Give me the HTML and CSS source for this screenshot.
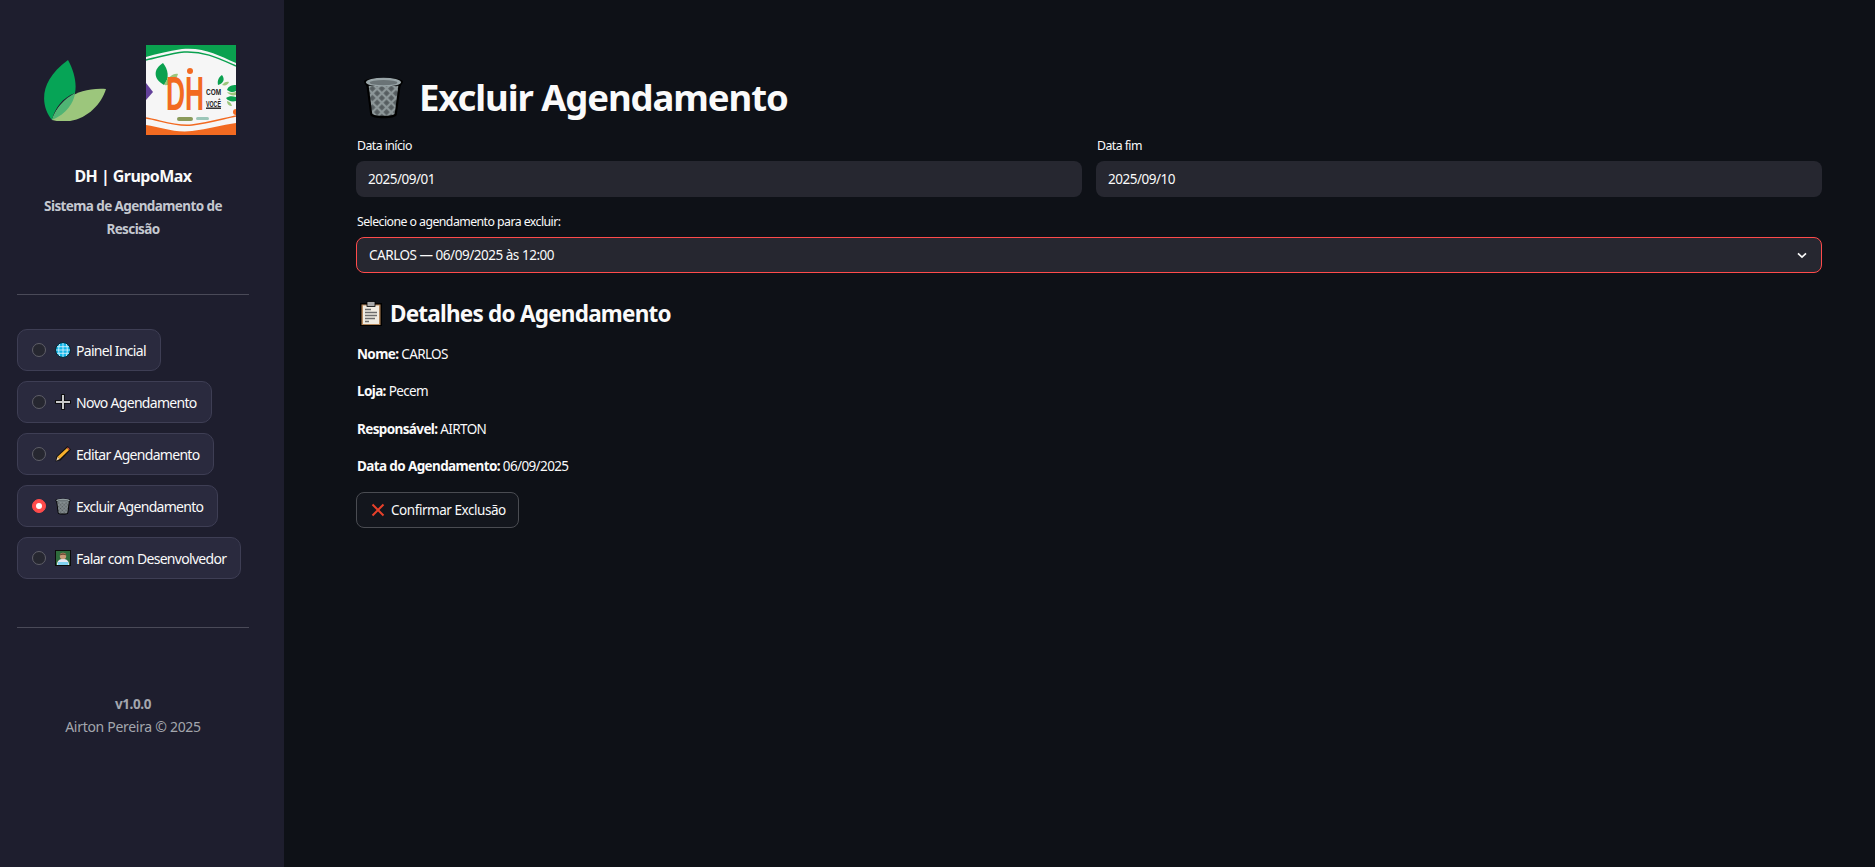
FILE: index.html
```html
<!DOCTYPE html>
<html lang="pt-BR">
<head>
    <meta charset="utf-8">
    <title>Excluir Agendamento</title>
    <link rel="stylesheet" href="styles.css">
</head>
<body>
    <div class="app">
        <aside class="sidebar">
            <div class="logos">
                <svg class="logo-leaf" viewBox="44 58 64 62" width="64" height="62">
                    <path d="M52 119C40 104 39 80 68 59C74 70 77 82 75 92C62 97 55 107 52 119Z" fill="#06a456"/>
                    <path d="M52 119C58 101 76 86 106 88C100 108 78 126 52 119Z" fill="#9cc67c"/>
                    <path d="M52 119C56 107 64 98 75 92C74 102 66 113 52 119Z" fill="#4fb474"/>
                </svg>
                <svg class="logo-dh" viewBox="0 0 90 90" width="90" height="90">
                    <rect width="90" height="90" fill="#f6f6f6"/>
                    <path d="M0 0H90V18C72 10 58 2 36 4C22 6 10 9 0 12Z" fill="#0aa14f"/>
                    <path d="M0 15C14 12 26 8 38 7C58 6 72 13 90 21" fill="none" stroke="#0aa14f" stroke-width="1.500"/>
                    <path d="M0 80C14 82 28 88 46 86C62 84 76 80 90 78V90H0Z" fill="#f26a21"/>
                    <path d="M0 73C14 75 28 82 46 80C62 78 76 74 90 71" fill="none" stroke="#f26a21" stroke-width="1.500"/>
                    <path d="M0 38L7 47L0 55Z" fill="#63419a"/>
                    <path d="M18 40C7 34 7 24 17 18C22 24 24 33 18 40Z" fill="#0aa14f"/>
                    <path d="M18 40C22 32 27 28 32 29C30 36 24 41 18 40Z" fill="#9cc67c"/>
                    <text class="logo-dh-big" transform="translate(20 65) scale(.548 1)">DH</text>
                    <text class="logo-dh-small" transform="translate(60 50) scale(.68 1)">COM</text>
                    <text class="logo-dh-small" transform="translate(60 61.500) scale(.556 1)">VOCÊ</text>
                    <rect x="60" y="62.500" width="15" height="1.400" fill="#222"/>
                    <circle cx="44" cy="26" r="3" fill="#f26a21"/>
                    <path d="M72 40C71 35 73 32 76 30C79 34 78 38 72 40Z" fill="#0aa14f"/>
                    <path d="M76 40C78 37 81 36 83 37C82 40 79 41 76 40Z" fill="#9cc67c"/>
                    <path d="M81 45C82 41 86 40 90 40V46C87 48 84 47 81 45Z" fill="#0aa14f"/>
                    <path d="M81 47C84 48 87 48 90 47V50C87 51 83 50 81 47Z" fill="#9cc67c"/>
                    <path d="M80 53C83 51 86 51 90 52V56C86 57 82 56 80 53Z" fill="#0aa14f"/>
                    <path d="M81 56C84 57 85 58 86 61C83 61 81 59 81 56Z" fill="#9cc67c"/>
                    <rect x="31" y="72" width="16" height="4" rx="2" fill="#8a9a5a"/>
                    <rect x="50" y="72" width="13" height="3" rx="1.500" fill="#9cc6b8"/>
                    <circle cx="90" cy="67" r="3" fill="#f26a21"/>
                </svg>
            </div>
            <div class="brand">DH | GrupoMax</div>
            <div class="tagline">Sistema de Agendamento de Rescisão</div>
            <hr class="side-rule side-rule-top">

            <nav class="menu">
                <label class="menu-item">
                    <span class="radio"></span>
                    <svg class="menu-icon" viewBox="0 0 16 16" width="16" height="16">
                        <circle cx="8" cy="8" r="7.400" fill="#0fb5e8" stroke="#06222c" stroke-width="1"/>
                        <path d="M1 8H15M2 4.700H14M2 11.300H14M8 1V15M4.600 2C3.400 6 3.400 10 4.600 14M11.400 2C12.600 6 12.600 10 11.400 14" fill="none" stroke="#dff6ff" stroke-width=".8"/>
                    </svg>
                    <span>Painel Incial</span>
                </label>
                <label class="menu-item">
                    <span class="radio"></span>
                    <svg class="menu-icon" viewBox="0 0 16 16" width="16" height="16">
                        <path d="M8 0V16M0 8H16" stroke="#0b0b0b" stroke-width="3.600"/>
                        <path d="M8 1V15M1 8H15" stroke="#c9c9c9" stroke-width="2"/>
                    </svg>
                    <span>Novo Agendamento</span>
                </label>
                <label class="menu-item">
                    <span class="radio"></span>
                    <svg class="menu-icon" viewBox="0 0 16 16" width="16" height="16">
                        <path d="M.5 15.500L1.500 10.500L12.500 0L16 3.500L5.500 14.500Z" fill="#111"/>
                        <path d="M2.500 10.800L12 2L14 4L4.800 13Z" fill="#f6b02c"/>
                        <path d="M12 2L12.800 1.200L14.800 3.200L14 4Z" fill="#e2574c"/>
                        <path d="M1.300 14.700L2.500 10.800L4.800 13Z" fill="#f1d3a6"/>
                    </svg>
                    <span>Editar Agendamento</span>
                </label>
                <label class="menu-item">
                    <span class="radio radio-on"></span>
                    <svg class="menu-icon" viewBox="0 2 40 41" width="16" height="17">
                        <use href="#trash"/>
                    </svg>
                    <span>Excluir Agendamento</span>
                </label>
                <label class="menu-item">
                    <span class="radio"></span>
                    <svg class="menu-icon" viewBox="0 0 16 16" width="16" height="16">
                        <rect x=".5" y=".5" width="15" height="15" fill="#2f6b3c" stroke="#0b0b0b"/>
                        <path d="M2 15C2 10 5 9 8 9C11 9 14 10 14 15Z" fill="#e8e8f2"/>
                        <circle cx="8" cy="6" r="3.200" fill="#c99a78"/>
                        <path d="M4.700 5.500C5 2.500 11 2.500 11.300 5.500C9.500 4.500 6.500 4.500 4.700 5.500Z" fill="#6b4630"/>
                        <rect x="3" y="12" width="10" height="3" fill="#7fd2f0"/>
                    </svg>
                    <span>Falar com Desenvolvedor</span>
                </label>
            </nav>

            <hr class="side-rule side-rule-bottom">
            <div class="version">v1.0.0</div>
            <div class="credit">Airton Pereira © 2025</div>
        </aside>

        <main class="content">
            <h1 class="page-title">
                <svg class="title-icon" viewBox="0 2 40 41" width="41" height="43">
                    <defs>
                        <pattern id="mesh" width="6.500" height="6.500" patternUnits="userSpaceOnUse" patternTransform="rotate(45)">
                            <rect width="6.500" height="6.500" fill="#8d9799"/>
                            <rect width="4.300" height="4.300" x="1.100" y="1.100" fill="#565d60"/>
                        </pattern>
                        <g id="trash">
                            <path d="M1 7C1 2 39 2 39 7C39 9 37 10 36.500 12L33 39C32.500 44 7.500 44 7 39L3.500 12C3 10 1 9 1 7Z" fill="#000"/>
                            <path d="M5.500 11L9 38C9.500 41 30.500 41 31 38L34.500 11Z" fill="url(#mesh)"/>
                            <ellipse cx="20" cy="7.500" rx="17" ry="4.300" fill="#9aa6a9"/>
                            <ellipse cx="20" cy="8" rx="13.500" ry="2.500" fill="#6a7376"/>
                        </g>
                    </defs>
                    <use href="#trash"/>
                </svg>
                <span>Excluir Agendamento</span>
            </h1>

            <div class="date-row">
                <div class="field">
                    <div class="field-label">Data início</div>
                    <div class="input">2025/09/01</div>
                </div>
                <div class="field">
                    <div class="field-label">Data fim</div>
                    <div class="input">2025/09/10</div>
                </div>
            </div>

            <div class="field">
                <div class="field-label">Selecione o agendamento para excluir:</div>
                <div class="input select">
                    <span>CARLOS — 06/09/2025 às 12:00</span>
                    <svg viewBox="0 0 12 8" width="10" height="7">
                        <path d="M1.200 1.500L6 6L10.800 1.500" fill="none" stroke="#fafafa" stroke-width="2"/>
                    </svg>
                </div>
            </div>

            <h3 class="section-title">
                <svg class="section-icon" viewBox="0 0 24 26" width="24" height="27">
                    <rect x="1" y="2.500" width="22" height="23" fill="#000"/>
                    <rect x="2.500" y="4" width="19" height="20.500" fill="#b5885c"/>
                    <rect x="4" y="5" width="16" height="18.500" fill="#f1ece2"/>
                    <rect x="8" y="1" width="8" height="5" fill="#a9a9a9" stroke="#000" stroke-width=".8"/>
                    <path d="M6 9H12M6 12H18M6 15H18M6 18H16M6 21H10" stroke="#6d6d6d" stroke-width="1.300"/>
                </svg>
                <span>Detalhes do Agendamento</span>
            </h3>

            <p class="detail"><strong>Nome:</strong> CARLOS</p>
            <p class="detail"><strong>Loja:</strong> Pecem</p>
            <p class="detail"><strong>Responsável:</strong> AIRTON</p>
            <p class="detail"><strong>Data do Agendamento:</strong> 06/09/2025</p>

            <button class="confirm">
                <svg viewBox="0 0 14 14" width="14" height="14">
                    <path d="M1.500 1.500L12.500 12.500M12.500 1.500L1.500 12.500" stroke="#e8402a" stroke-width="2"/>
                </svg>
                <span>Confirmar Exclusão</span>
            </button>
        </main>
    </div>
</body>
</html>
```

FILE: styles.css
```css
* { box-sizing: border-box; }
body { margin: 0; background: #0e1117; color: #fafafa; font-family: "Noto Sans", "Liberation Sans", sans-serif; }
.app { display: flex; min-height: 867px; }

.sidebar { width: 284px; flex-shrink: 0; background: #1e1e2e; padding: 45px 35px 0 17px; font-size: 14px; }
.logos { display: flex; align-items: center; gap: 38px; padding-left: 27px; height: 90px; }
.logo-dh-big { font-family: "Liberation Sans", sans-serif; font-weight: 700; font-size: 48px; fill: #f26a21; }
.logo-dh-small { font-family: "Liberation Sans", sans-serif; font-weight: 700; font-size: 9.500px; fill: #222; }
.brand { margin-top: 30px; text-align: center; font-size: 16px; line-height: 22px; font-weight: 700; letter-spacing: -.55px; }
.tagline { margin-top: 8px; text-align: center; font-size: 13.500px; line-height: 23px; font-weight: 700; color: #c4c8d0; letter-spacing: -.6px; padding: 0 10px; }
.side-rule { border: 0; border-top: 1px solid #4a4a58; margin: 0; }
.side-rule-top { margin-top: 53px; }
.side-rule-bottom { margin-top: 48px; }

.menu { display: flex; flex-direction: column; align-items: flex-start; gap: 10px; margin-top: 34px; }
.menu-item { display: flex; align-items: center; height: 42px; padding: 0 14px; background: #2a2a3e; border: 1px solid #3e3e54; border-radius: 10px; font-size: 14px; letter-spacing: -.7px; }
.radio { width: 14px; height: 14px; margin-right: 9px; border-radius: 50%; background: #262730; border: 1px solid #5f5f68; display: flex; align-items: center; justify-content: center; }
.radio-on { background: #ff4b4b; border-color: #ff4b4b; }
.radio-on::after { content: ""; width: 6px; height: 6px; border-radius: 50%; background: #fff; }
.menu-icon { margin-right: 5px; flex-shrink: 0; }

.version { margin-top: 66px; text-align: center; font-size: 13.500px; line-height: 20px; font-weight: 700; color: #a3a6ad; letter-spacing: -.4px; }
.credit { margin-top: 3px; text-align: center; font-size: 14px; line-height: 20px; color: #a3a6ad; letter-spacing: -.3px; }

.content { flex: 1; padding: 72px 53px 0 72px; }
.page-title { display: flex; align-items: center; gap: 15px; margin: 0 0 0 7px; height: 50px; font-size: 36.500px; font-weight: 700; letter-spacing: -1.100px; }
.date-row { display: flex; gap: 14px; margin-top: 14px; }
.date-row .field { flex: 1; }
.field-label { font-size: 12.300px; line-height: 20px; margin: 0 0 5px 1px; letter-spacing: -.55px; }
.input { height: 36px; display: flex; align-items: center; padding: 0 12px; background: #262730; border-radius: 8px; font-size: 13.500px; letter-spacing: -.47px; }
.date-row + .field { margin-top: 15px; }
.select { justify-content: space-between; padding-right: 14px; border: 1px solid #ff4b4b; }

.section-title { display: flex; align-items: center; gap: 7px; margin: 22px 0 0 3px; height: 36px; font-size: 22.500px; font-weight: 700; letter-spacing: -.77px; }
.detail { margin: 0 0 0 1px; height: 37.300px; line-height: 37.300px; font-size: 13.500px; letter-spacing: -.62px; }
.section-title + .detail { margin-top: 5px; }
.confirm { display: flex; align-items: center; gap: 6px; height: 36px; margin-top: 7px; padding: 0 12px 0 14px; background: #13161d; border: 1px solid #4a4c52; border-radius: 8px; color: #fafafa; font-family: inherit; font-size: 13.500px; letter-spacing: -.45px; }
```
